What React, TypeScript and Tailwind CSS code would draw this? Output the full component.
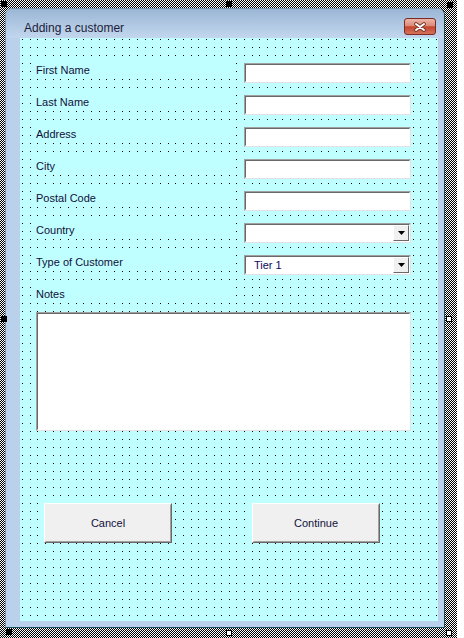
import React from 'react';

// designer grid: dots every ~7.66px across, 8px down
const GRID_W = 418;
const GRID_H = 583;
let gridPath = '';
for (let r = 0; 1 + 8 * r < GRID_H; r++) {
  for (let c = 0; 2 + 7.66 * c < GRID_W; c++) {
    gridPath += `M${Math.round(2 + 7.66 * c)} ${1 + 8 * r}h1v1h-1z`;
  }
}

const FONT = { fontFamily: '"Liberation Sans", Arial, sans-serif' };

function TextBox({ children, w = 'w-[167px]' }: { children?: React.ReactNode; w?: string }) {
  return (
    <div className={`${w} h-[20px] border border-[#a0a0a0] border-b-[#e3e3e3] border-r-[#e3e3e3]`}>
      <div className="h-full border border-[#696969] border-b-white border-r-white bg-white flex items-stretch">
        {children}
      </div>
    </div>
  );
}

function ComboBox({ value }: { value?: string }) {
  return (
    <TextBox>
      <div className="flex-1 pl-[8px] text-[11px] leading-[16px] text-[#0a0a5a]">{value}</div>
      <div className="w-[16px] border border-white border-b-[#696969] border-r-[#696969] bg-[#f0f0f0] flex items-center justify-center">
        <svg width="7" height="4" viewBox="0 0 7 4">
          <path d="M0 0h7L3.5 4z" fill="#000" />
        </svg>
      </div>
    </TextBox>
  );
}

function Row({ label, children }: { label: string; children: React.ReactNode }) {
  return (
    <div className="flex h-[32px] items-start">
      <div className="w-[196px] h-[16px] bg-[#c0ffff] pl-[2px] text-[11px] leading-[16px] text-[#10103c]">{label}</div>
      <div className="ml-[14px] mt-[1px]">{children}</div>
    </div>
  );
}

function Button({ label }: { label: string }) {
  return (
    <div className="w-[128px] h-[40px] border border-white border-b-[#696969] border-r-[#696969]">
      <div className="h-full border border-transparent border-b-[#a0a0a0] border-r-[#a0a0a0] bg-[#f0f0f0] flex items-center justify-center text-[11px] text-[#10103c]">
        {label}
      </div>
    </div>
  );
}

function Handle({ x, y, filled }: { x: string; y: string; filled: boolean }) {
  return (
    <div
      className={`absolute ${x} ${y} w-[6px] h-[6px] border border-black ${filled ? 'bg-black' : 'bg-white'}`}
    />
  );
}

export default function App() {
  return (
    <div className="relative w-[464px] h-[638px] bg-white overflow-hidden" style={FONT}>
      {/* selection frame */}
      <div className="w-[457px] h-[638px] pl-[5px] pt-[8px] pr-[12px] pb-[10px] bg-[repeating-conic-gradient(#000_0_25%,#fff_0_50%)] bg-[length:2px_2px]">
        {/* userform window */}
        <div className="w-[440px] h-[620px] rounded-t-[7px] border border-[#7890a8] border-r-[#16505e] border-b-[#16505e] bg-[#b9d1ea] flex flex-col overflow-hidden">
          {/* title bar */}
          <div className="h-[29px] flex items-start justify-between pl-[18px] pr-[8px] pt-[9px] bg-[linear-gradient(#9bb6d5,#c2d7ee)]">
            <span className="text-[12px] leading-[16px] text-[#1c1c3a] mt-[2px]">Adding a customer</span>
            <div className="w-[32px] h-[17px] rounded-[3px] border border-[#7a2a22] bg-[linear-gradient(#ecb6aa,#dc8a76_45%,#c4452e_52%,#d5735b)] flex items-center justify-center">
              <svg width="14" height="10" viewBox="0 0 14 10">
                <path d="M3 2L11 8M11 2L3 8" stroke="#6b3028" strokeWidth="3.6" strokeLinecap="round" />
                <path d="M3 2L11 8M11 2L3 8" stroke="#fff" strokeWidth="2" strokeLinecap="round" />
              </svg>
            </div>
          </div>
          {/* body */}
          <div className="flex-1 pl-[14px] pr-[6px] pb-[6px]">
            <div className="relative w-[418px] h-[583px] bg-[#c0ffff]">
              <svg className="absolute inset-0" width={GRID_W} height={GRID_H} shapeRendering="crispEdges">
                <path d={gridPath} fill="#000" />
              </svg>
              <div className="relative flex flex-col pl-[14px] pt-[24px]">
                <Row label="First Name"><TextBox /></Row>
                <Row label="Last Name"><TextBox /></Row>
                <Row label="Address"><TextBox /></Row>
                <Row label="City"><TextBox /></Row>
                <Row label="Postal Code"><TextBox /></Row>
                <Row label="Country"><ComboBox /></Row>
                <Row label="Type of Customer"><ComboBox value="Tier 1" /></Row>
                <div className="w-[196px] h-[16px] bg-[#c0ffff] pl-[2px] text-[11px] leading-[16px] text-[#10103c]">Notes</div>
                <div className="mt-[10px] ml-[2px]">
                  <div className="w-[375px] h-[119px] border border-[#a0a0a0] border-b-[#e3e3e3] border-r-[#e3e3e3]">
                    <div className="h-full border border-[#696969] border-b-white border-r-white bg-white" />
                  </div>
                </div>
                <div className="flex gap-[80px] ml-[10px] mt-[72px]">
                  <Button label="Cancel" />
                  <Button label="Continue" />
                </div>
              </div>
            </div>
          </div>
        </div>
      </div>
      {/* sizing handles */}
      <Handle x="left-[1px]" y="top-[1px]" filled />
      <Handle x="left-[226px]" y="top-[1px]" filled />
      <Handle x="left-[447px]" y="top-[2px]" filled />
      <Handle x="left-[1px]" y="top-[316px]" filled />
      <Handle x="left-[446px]" y="top-[316px]" filled={false} />
      <Handle x="left-[6px]" y="top-[629px]" filled />
      <Handle x="left-[226px]" y="top-[630px]" filled={false} />
      <Handle x="left-[446px]" y="top-[630px]" filled={false} />
    </div>
  );
}
